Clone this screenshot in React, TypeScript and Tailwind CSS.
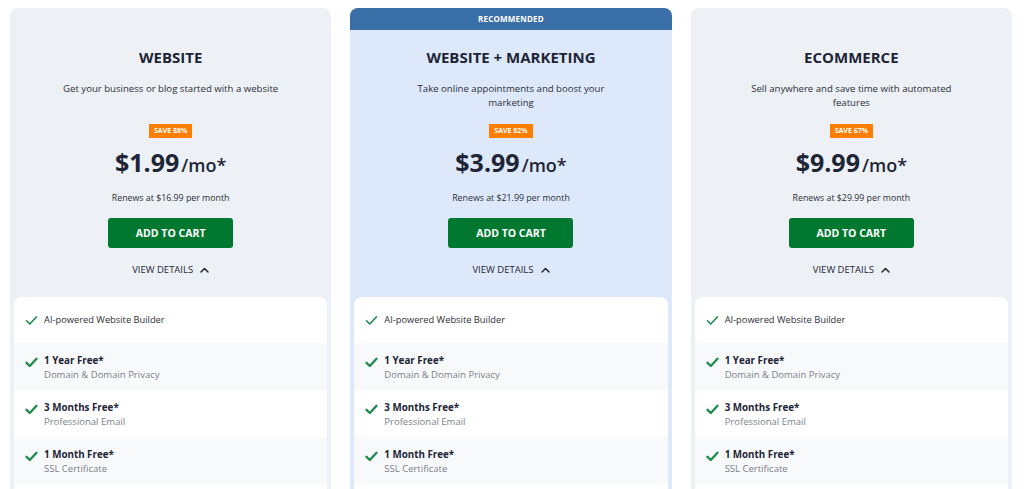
import React from "react";

type Plan = {
  title: string;
  desc: string;
  save: string;
  price: string;
  renew: string;
  recommended?: boolean;
};

const plans: Plan[] = [
  { title: "WEBSITE", desc: "Get your business or blog started with a website", save: "SAVE 88%", price: "$1.99", renew: "Renews at $16.99 per month" },
  { title: "WEBSITE + MARKETING", desc: "Take online appointments and boost your marketing", save: "SAVE 82%", price: "$3.99", renew: "Renews at $21.99 per month", recommended: true },
  { title: "ECOMMERCE", desc: "Sell anywhere and save time with automated features", save: "SAVE 67%", price: "$9.99", renew: "Renews at $29.99 per month" },
];

const features = [
  { title: "1 Year Free*", sub: "Domain & Domain Privacy" },
  { title: "3 Months Free*", sub: "Professional Email" },
  { title: "1 Month Free*", sub: "SSL Certificate" },
];

function Check({ bold }: { bold?: boolean }) {
  return (
    <svg width="13" height="11" viewBox="0 0 13 11" className="shrink-0">
      <path d="M1.5 5.8 L4.8 9 L11.5 1.8" fill="none" stroke="#1e8a4e" strokeWidth={bold ? 2.3 : 1.6} strokeLinecap="round" strokeLinejoin="round" />
    </svg>
  );
}

function Card({ p }: { p: Plan }) {
  return (
    <div className={`flex flex-col rounded-lg overflow-hidden ${p.recommended ? "bg-[#dde9fb]" : "bg-[#edf1f6]"}`}>
      {p.recommended ? (
        <div className="h-[22px] bg-[#3a6ea6] flex items-center justify-center text-white text-[8px] font-bold tracking-[0.2px]">RECOMMENDED</div>
      ) : (
        <div className="h-[22px]" />
      )}
      <div className="flex flex-col items-center">
        <div className="mt-[17px] h-[20px] leading-[20px] text-[15px] font-bold text-[#1d2536]">{p.title}</div>
        <div className="mt-[15px] h-[28px] w-[218px] text-[9.6px] leading-[14px] text-[#2c2f36] text-center">{p.desc}</div>
        <div className="mt-[14px] h-[14px] px-[5px] bg-[#ff7d00] text-white text-[7px] font-bold flex items-center">{p.save}</div>
        <div className="mt-[8px] h-[32px] flex items-baseline text-[#1d2536]">
          <span className="text-[25px] font-bold leading-[32px]">{p.price}</span>
          <span className="text-[18px] font-semibold ml-[2px]">/mo*</span>
        </div>
        <div className="mt-[14px] h-[12px] leading-[12px] text-[8.8px] text-[#2c2f36]">{p.renew}</div>
        <div className="mt-[14px] w-[125px] h-[30px] pt-[2px] rounded-[3px] bg-[#00782f] text-white text-[10.5px] font-bold flex items-center justify-center">ADD TO CART</div>
        <div className="mt-[15px] h-[14px] flex items-center gap-[7px] text-[9.5px] font-medium text-[#1d2536]">
          <span>VIEW DETAILS</span>
          <svg width="9" height="6" viewBox="0 0 9 6">
            <path d="M1 5 L4.5 1.5 L8 5" fill="none" stroke="#1d2536" strokeWidth="1.5" strokeLinecap="round" strokeLinejoin="round" />
          </svg>
        </div>
      </div>
      <div className="mt-[20px] mx-[4px] bg-white rounded-t-lg flex flex-col">
        <div className="h-[46px] flex items-center gap-[6px] pl-[11px] text-[9.3px] text-[#2c2f36]">
          <Check />
          <span>AI-powered Website Builder</span>
        </div>
        {features.map((f, i) => (
          <div key={f.title} className={`h-[47px] flex items-start gap-[6px] pl-[11px] pt-[11px] ${i % 2 === 0 ? "bg-[#f8f9fb]" : "bg-white"}`}>
            <div className="mt-[3px]"><Check bold /></div>
            <div className="flex flex-col">
              <span className="text-[9.8px] leading-[14px] font-bold text-[#1d2536]">{f.title}</span>
              <span className="text-[9.5px] leading-[14px] text-[#7a7f88]">{f.sub}</span>
            </div>
          </div>
        ))}
        <div className="h-[40px] bg-white" />
      </div>
    </div>
  );
}

export default function App() {
  return (
    <div className="w-[1024px] h-[489px] overflow-hidden bg-white" style={{ fontFamily: '"Open Sans", "Noto Sans", sans-serif' }}>
      <div className="grid grid-cols-3 gap-[19px] pl-[10px] pr-[12px] pt-[8px]">
        {plans.map((p) => (
          <Card key={p.title} p={p} />
        ))}
      </div>
    </div>
  );
}
